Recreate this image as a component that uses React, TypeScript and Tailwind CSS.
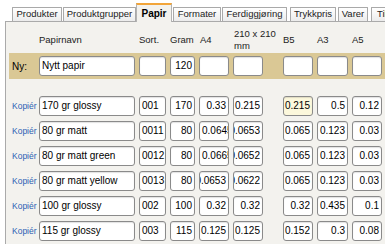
import React from "react";

type Tab = { label: string; cls: string; active?: boolean };

const tabs: Tab[] = [
  { label: "Produkter", cls: "w-[50px]" },
  { label: "Produktgrupper", cls: "w-[73px] ml-[1px]" },
  { label: "Papir", cls: "w-[36px]", active: true },
  { label: "Formater", cls: "w-[48px] ml-[1px]" },
  { label: "Ferdiggjøring", cls: "w-[65px] ml-[1px]" },
  { label: "Trykkpris", cls: "w-[46px] ml-[3px]" },
  { label: "Varer", cls: "w-[30px] ml-[2px]" },
  { label: "Tilbud", cls: "w-[40px] ml-[3px] justify-start pl-[5px]" },
];

type Cell = { v: string; clip?: "l" | "r"; hl?: boolean };
type Row = { name: string; sort: string; gram: string; vals: Cell[] };

const rows: Row[] = [
  {
    name: "170 gr glossy",
    sort: "001",
    gram: "170",
    vals: [{ v: "0.33" }, { v: "0.215" }, { v: "0.215", hl: true }, { v: "0.5" }, { v: "0.12" }],
  },
  {
    name: "80 gr matt",
    sort: "0011",
    gram: "80",
    vals: [{ v: "0.0645", clip: "r" }, { v: "0.0653", clip: "l" }, { v: "0.065" }, { v: "0.123" }, { v: "0.03" }],
  },
  {
    name: "80 gr matt green",
    sort: "0012",
    gram: "80",
    vals: [{ v: "0.0665", clip: "r" }, { v: "0.0652", clip: "l" }, { v: "0.065" }, { v: "0.123" }, { v: "0.03" }],
  },
  {
    name: "80 gr matt yellow",
    sort: "0013",
    gram: "80",
    vals: [{ v: "0.0653", clip: "l" }, { v: "0.0622", clip: "l" }, { v: "0.065" }, { v: "0.123" }, { v: "0.03" }],
  },
  {
    name: "100 gr glossy",
    sort: "002",
    gram: "100",
    vals: [{ v: "0.32" }, { v: "0.32" }, { v: "0.32" }, { v: "0.435" }, { v: "0.1" }],
  },
  {
    name: "115 gr glossy",
    sort: "003",
    gram: "115",
    vals: [{ v: "0.125" }, { v: "0.125" }, { v: "0.152" }, { v: "0.3" }, { v: "0.08" }],
  },
];

const GRID =
  "grid grid-cols-[26px_96px_27px_25px_30px_46px_30px_31px_30px] gap-x-[4px] items-center";

function Field({
  value = "",
  align = "right",
  clip,
  hl,
  narrow,
}: {
  value?: string;
  align?: "left" | "right";
  clip?: "l" | "r";
  hl?: boolean;
  narrow?: boolean;
}) {
  let justify = align === "right" ? "justify-end" : "justify-start";
  if (clip === "l") justify = "justify-end";
  if (clip === "r") justify = "justify-start";
  return (
    <div
      className={`h-[20px] ${narrow ? "w-[30px]" : "w-full"} border border-[#8a8a8a] rounded-[3px] ${
        hl ? "bg-[#fcf8dc]" : "bg-white"
      } shadow-[inset_0_1px_1px_rgba(0,0,0,0.12)] flex items-center ${justify} overflow-hidden px-[2px] text-[10px] leading-none text-black whitespace-nowrap`}
    >
      <span className="shrink-0">{value}</span>
    </div>
  );
}

export default function App() {
  return (
    <div className="w-[385px] h-[244px] overflow-hidden bg-white font-['Liberation_Sans',Arial,sans-serif] text-[#1a1a1a]">
      {/* Tabs */}
      <div className="flex items-end h-[21px] pt-[3px] pl-[12px] whitespace-nowrap">
        {tabs.map((t) =>
          t.active ? (
            <div
              key={t.label}
              className={`${t.cls} shrink-0 relative z-10 -mb-px h-[19px] border-t-2 border-x border-t-[#f2a53a] border-x-[#b3b3b3] bg-[#f3f2ee] flex items-center justify-center text-[10px] font-bold text-black`}
            >
              {t.label}
            </div>
          ) : (
            <div
              key={t.label}
              className={`${t.cls} shrink-0 h-[14px] border border-b-0 border-[#a9a9a9] rounded-t-[1px] bg-gradient-to-b from-white to-[#ececec] flex items-center justify-center text-[9.5px] text-[#222]`}
            >
              {t.label}
            </div>
          )
        )}
      </div>

      {/* Panel */}
      <div className="ml-[5px] border-t border-l border-[#aaaaaa] bg-[#f3f2ee] h-[230px] pt-[6px] pl-[3px]">
        {/* Header */}
        <div className={`${GRID} h-[24px] mb-[1px] text-[9.5px] leading-[12px] text-[#222]`}>
          <div />
          <div>Papirnavn</div>
          <div>Sort.</div>
          <div>Gram</div>
          <div className="pl-[1px]">A4</div>
          <div className="pl-[1px]">
            210 x 210
            <br />
            mm
          </div>
          <div>B5</div>
          <div>A3</div>
          <div>A5</div>
        </div>

        {/* New row */}
        <div className={`${GRID} bg-[#dac895] py-[3px]`}>
          <div className="pl-[3px] text-[10px] text-black">Ny:</div>
          <Field value="Nytt papir" align="left" />
          <Field />
          <Field value="120" />
          <Field />
          <Field narrow />
          <Field />
          <Field />
          <Field />
        </div>

        {/* Data rows */}
        <div className="mt-[17px] flex flex-col gap-[5px]">
          {rows.map((r) => (
            <div key={r.name} className={GRID}>
              <a className="pl-[3px] text-[8.5px] text-[#2b5fb4] whitespace-nowrap cursor-pointer">Kopiér</a>
              <Field value={r.name} align="left" />
              <Field value={r.sort} align="left" />
              <Field value={r.gram} />
              <Field value={r.vals[0].v} clip={r.vals[0].clip} />
              <Field value={r.vals[1].v} clip={r.vals[1].clip} narrow />
              <Field value={r.vals[2].v} hl={r.vals[2].hl} />
              <Field value={r.vals[3].v} />
              <Field value={r.vals[4].v} />
            </div>
          ))}
        </div>
      </div>
    </div>
  );
}
